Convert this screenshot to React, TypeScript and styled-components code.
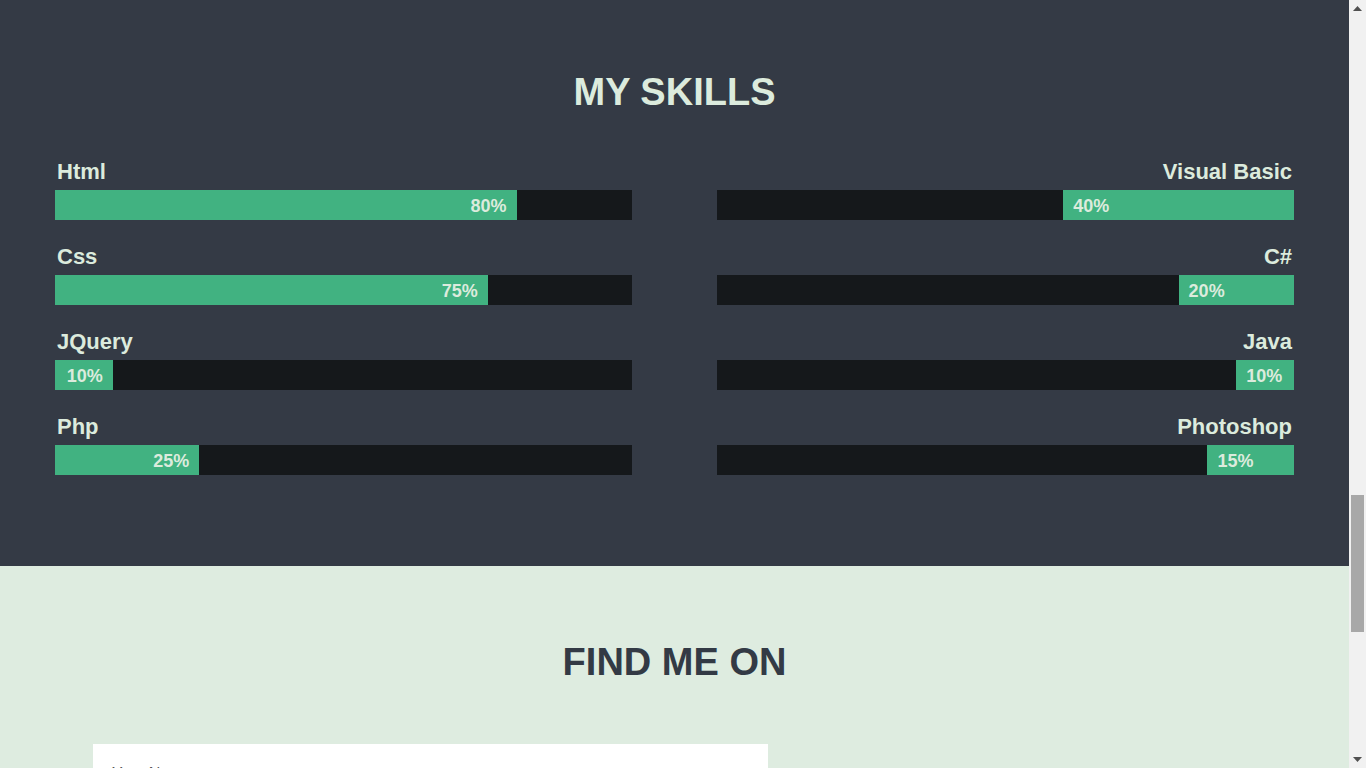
import React from "react";
import styled, { createGlobalStyle } from "styled-components";

const GlobalStyle = createGlobalStyle`
  html { scrollbar-width: none; }
  html::-webkit-scrollbar { display: none; }
  body {
    margin: 0;
    font-family: "Liberation Sans", Arial, sans-serif;
    background: #deece0;
  }
`;

const Shell = styled.div`
  display: flex;
  align-items: flex-start;
`;

const Page = styled.main`
  flex: 1;
  min-width: 0;
`;

const ScrollRail = styled.div`
  position: sticky;
  top: 0;
  width: 17px;
  height: 100vh;
  flex: none;
  background: #f1f1f1;
  display: flex;
  flex-direction: column;
`;

const RailButton = styled.div`
  height: 17px;
  flex: none;
  display: flex;
  align-items: center;
  justify-content: center;
`;

const RailTrack = styled.div`
  flex: 1;
  display: flex;
  flex-direction: column;
  align-items: center;
`;

const Thumb = styled.div`
  margin-top: 478px;
  width: 13px;
  height: 137px;
  background: #a8a8a8;
`;

const SkillsSection = styled.section`
  background: #343a45;
  padding: 70px 55px 91px;
`;

const Title = styled.h2<{ $dark?: boolean }>`
  margin: 0;
  text-align: center;
  font-size: 38px;
  line-height: 44px;
  font-weight: 700;
  color: ${(p) => (p.$dark ? "#333a45" : "#dcebdd")};
`;

const SkillGrid = styled.div`
  margin-top: 45px;
  display: grid;
  grid-template-columns: 1fr 1fr;
  column-gap: 85px;
`;

const Column = styled.div`
  display: flex;
  flex-direction: column;
  gap: 24px;
`;

const Skill = styled.div<{ $right?: boolean }>`
  display: flex;
  flex-direction: column;
  align-items: stretch;
  text-align: ${(p) => (p.$right ? "right" : "left")};
`;

const SkillName = styled.div`
  font-size: 22px;
  line-height: 25px;
  font-weight: 700;
  color: #dcebdd;
  padding: 0 2px;
  margin-bottom: 6px;
`;

const Track = styled.div<{ $right?: boolean }>`
  height: 30px;
  background: #15181b;
  display: flex;
  justify-content: ${(p) => (p.$right ? "flex-end" : "flex-start")};
`;

const Fill = styled.div<{ $right?: boolean }>`
  height: 30px;
  background: #41b281;
  box-sizing: border-box;
  padding: 0 10px;
  font-size: 18px;
  line-height: 32px;
  font-weight: 700;
  color: #dcebdd;
  text-align: ${(p) => (p.$right ? "left" : "right")};
  white-space: nowrap;
  overflow: hidden;
`;

const ContactSection = styled.section`
  background: #deece0;
  padding: 74px 93px 80px;
`;

const Form = styled.form`
  margin-top: 60px;
  width: 675px;
  background: #ffffff;
  padding: 21px 19px 24px;
  box-sizing: border-box;
  display: flex;
  flex-direction: column;
  gap: 16px;
`;

const FieldLabel = styled.label`
  font-size: 16px;
  line-height: 18px;
  color: #555;
  display: flex;
  flex-direction: column;
  gap: 6px;
`;

const Input = styled.input`
  height: 34px;
  border: 1px solid #ccc;
  font-family: inherit;
  font-size: 15px;
  padding: 0 10px;
`;

const TextArea = styled.textarea`
  height: 120px;
  border: 1px solid #ccc;
  font-family: inherit;
  font-size: 15px;
  padding: 8px 10px;
  resize: none;
`;

type SkillItem = { name: string; value: number };

const left: SkillItem[] = [
  { name: "Html", value: 80 },
  { name: "Css", value: 75 },
  { name: "JQuery", value: 10 },
  { name: "Php", value: 25 },
];

const right: SkillItem[] = [
  { name: "Visual Basic", value: 40 },
  { name: "C#", value: 20 },
  { name: "Java", value: 10 },
  { name: "Photoshop", value: 15 },
];

function SkillBar({ item, right: isRight }: { item: SkillItem; right?: boolean }) {
  return (
    <Skill $right={isRight}>
      <SkillName>{item.name}</SkillName>
      <Track $right={isRight}>
        <Fill $right={isRight} style={{ width: `${item.value}%` }}>
          {item.value}%
        </Fill>
      </Track>
    </Skill>
  );
}

function Arrow({ up }: { up?: boolean }) {
  return (
    <svg width="9" height="5" viewBox="0 0 9 5">
      {up ? <path d="M0 5 L4.5 0 L9 5 Z" fill="#505050" /> : <path d="M0 0 L4.5 5 L9 0 Z" fill="#505050" />}
    </svg>
  );
}

export default function App() {
  return (
    <Shell>
      <GlobalStyle />
      <Page>
        <SkillsSection>
          <Title>MY SKILLS</Title>
          <SkillGrid>
            <Column>
              {left.map((s) => (
                <SkillBar key={s.name} item={s} />
              ))}
            </Column>
            <Column>
              {right.map((s) => (
                <SkillBar key={s.name} item={s} right />
              ))}
            </Column>
          </SkillGrid>
        </SkillsSection>
        <ContactSection>
          <Title $dark>FIND ME ON</Title>
          <Form onSubmit={(e) => e.preventDefault()}>
            <FieldLabel>
              Your Name
              <Input type="text" />
            </FieldLabel>
            <FieldLabel>
              Your Email
              <Input type="email" />
            </FieldLabel>
            <FieldLabel>
              Message
              <TextArea />
            </FieldLabel>
          </Form>
        </ContactSection>
      </Page>
      <ScrollRail>
        <RailButton>
          <Arrow up />
        </RailButton>
        <RailTrack>
          <Thumb />
        </RailTrack>
        <RailButton>
          <Arrow />
        </RailButton>
      </ScrollRail>
    </Shell>
  );
}
